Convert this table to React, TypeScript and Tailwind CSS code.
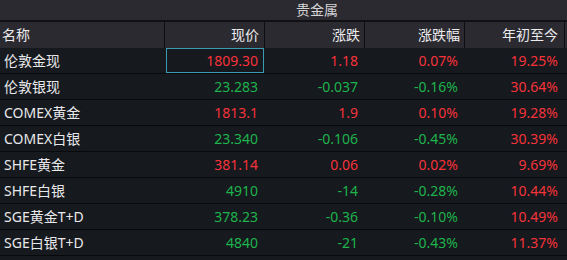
const rows = [
  { name: '伦敦金现', price: '1809.30', chg: '1.18', pct: '0.07%', ytd: '19.25%', up: true, pctUp: true },
  { name: '伦敦银现', price: '23.283', chg: '-0.037', pct: '-0.16%', ytd: '30.64%', up: false, pctUp: false },
  { name: 'COMEX黄金', price: '1813.1', chg: '1.9', pct: '0.10%', ytd: '19.28%', up: true, pctUp: true },
  { name: 'COMEX白银', price: '23.340', chg: '-0.106', pct: '-0.45%', ytd: '30.39%', up: false, pctUp: false },
  { name: 'SHFE黄金', price: '381.14', chg: '0.06', pct: '0.02%', ytd: '9.69%', up: true, pctUp: true },
  { name: 'SHFE白银', price: '4910', chg: '-14', pct: '-0.28%', ytd: '10.44%', up: false, pctUp: false },
  { name: 'SGE黄金T+D', price: '378.23', chg: '-0.36', pct: '-0.10%', ytd: '10.49%', up: false, pctUp: false },
  { name: 'SGE白银T+D', price: '4840', chg: '-21', pct: '-0.43%', ytd: '11.37%', up: false, pctUp: false },
];

const RED = 'text-[#f5333a]';
const GREEN = 'text-[#1eb34c]';

export default function App() {
  return (
    <div className="w-[567px] h-[260px] overflow-hidden bg-[#16191e] text-[14px] font-['Noto_Sans','Noto_Sans_CJK_SC',sans-serif] leading-none">
      <div className="h-[20px] bg-[#2b2a30] pl-[296px] flex items-center text-[#d4d4d6] text-[14px]">贵金属</div>
      <div className="h-[2px] bg-[#111114]" />
      <div className="h-[26px] bg-[#2b2a30] grid grid-cols-[165px_100px_100px_100px_100px_2px] text-[#ececef]">
        <div className="border-r border-[#0e0e11] flex items-center pl-[2px]">名称</div>
        <div className="border-r border-[#0e0e11] flex items-center justify-end pr-[5px]">现价</div>
        <div className="border-r border-[#0e0e11] flex items-center justify-end pr-[4px]">涨跌</div>
        <div className="border-r border-[#0e0e11] flex items-center justify-end pr-[4px]">涨跌幅</div>
        <div className="border-r border-[#0e0e11] flex items-center justify-end pr-[6px]">年初至今</div>
        <div />
      </div>
      {rows.map((r, i) => (
        <div key={r.name} className="h-[26px] border-b border-[#08090b] grid grid-cols-[165px_100px_100px_100px_100px]">
          <div className="flex items-center pl-[4px] text-[#e8e8ea]">{r.name}</div>
          <div className={`flex items-center justify-end ${i === 0 ? 'ml-px mr-[1px] border border-[#3a9cb2] pr-[5px]' : 'pr-[7px]'} ${r.up ? RED : GREEN}`}>{r.price}</div>
          <div className={`flex items-center justify-end pr-[7px] ${r.up ? RED : GREEN}`}>{r.chg}</div>
          <div className={`flex items-center justify-end pr-[7px] ${r.pctUp ? RED : GREEN}`}>{r.pct}</div>
          <div className={`flex items-center justify-end pr-[7px] ${RED}`}>{r.ytd}</div>
        </div>
      ))}
    </div>
  );
}
